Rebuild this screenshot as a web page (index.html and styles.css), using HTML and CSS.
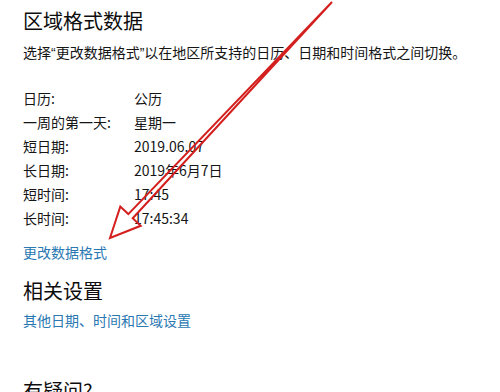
FILE: index.html
```html
<!DOCTYPE html>
<html lang="zh-CN">
<head>
<meta charset="utf-8">
<link rel="stylesheet" href="styles.css">
</head>
<body>
<main class="page">
  <h1 class="title">区域格式数据</h1>
  <p class="desc">选择<span class="q">“</span>更改数据格式<span class="q">”</span>以在地区所支持的日历、日期和时间格式之间切换。</p>
  <dl class="formats">
    <dt>日历:</dt><dd>公历</dd>
    <dt>一周的第一天:</dt><dd>星期一</dd>
    <dt>短日期:</dt><dd>2019.06.07</dd>
    <dt>长日期:</dt><dd>2019年6月7日</dd>
    <dt>短时间:</dt><dd>17:45</dd>
    <dt>长时间:</dt><dd>17:45:34</dd>
  </dl>
  <a class="link link-change" href="#">更改数据格式</a>
  <h2 class="title title-related">相关设置</h2>
  <a class="link link-other" href="#">其他日期、时间和区域设置</a>
  <h2 class="title title-question">有疑问?</h2>
</main>
<svg class="arrow" width="500" height="392" viewBox="0 0 500 392">
  <polygon points="332,2 132.7,218.3 140.7,225.8 110,238 120.3,206.6 128.3,214.1" fill="none" stroke="#d41f1f" stroke-width="2" stroke-linejoin="miter"/>
</svg>
</body>
</html>
```
FILE: styles.css
```css
html, body {
  margin: 0;
  padding: 0;
  background: #ffffff;
}
body {
  width: 500px;
  height: 392px;
  overflow: hidden;
  position: relative;
  font-family: "Noto Sans CJK SC", "Noto Sans", sans-serif;
  color: #151515;
}
.page {
  padding: 7px 0 0 23px;
  display: flex;
  flex-direction: column;
  align-items: flex-start;
}
.title {
  margin: 0;
  font-size: 20px;
  font-weight: 400;
  line-height: 28px;
  color: #0d0d0d;
}
.desc {
  margin: 7px 0 0;
  font-size: 14px;
  line-height: 20px;
}
.q {
  font-family: "Liberation Sans", sans-serif;
}
.formats {
  margin: 23px 0 0;
  display: grid;
  grid-template-columns: 111px auto;
  font-size: 14px;
  line-height: 24px;
}
.formats dt, .formats dd {
  margin: 0;
}
.link {
  font-size: 14px;
  line-height: 20px;
  color: #2a78b2;
  text-decoration: none;
}
.link-change {
  margin-top: 12px;
}
.title-related {
  margin-top: 15px;
}
.link-other {
  margin-top: 5px;
}
.title-question {
  margin-top: 47px;
}
.arrow {
  position: absolute;
  left: 0;
  top: 0;
  pointer-events: none;
}
```
